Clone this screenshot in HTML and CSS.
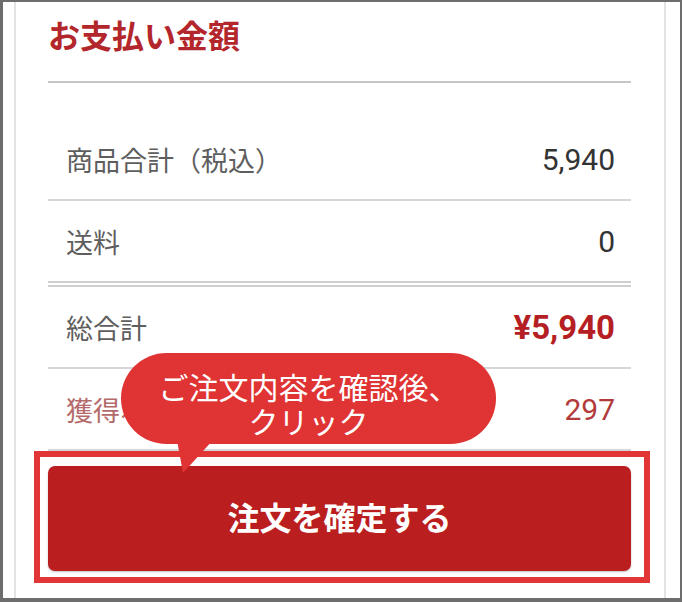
FILE: index.html
```html
<!DOCTYPE html>
<html lang="ja">
<head>
<meta charset="utf-8">
<title>お支払い金額</title>
<link rel="stylesheet" href="styles.css">
</head>
<body>
<div class="frame">
  <div class="card">
    <div class="content">
      <h2 class="title">お支払い金額</h2>
      <div class="rows">
        <div class="row">
          <span class="label">商品合計（税込）</span>
          <span class="value">5,940</span>
        </div>
        <div class="row row-double">
          <span class="label">送料</span>
          <span class="value">0</span>
        </div>
        <div class="row">
          <span class="label">総合計</span>
          <span class="value value-total">¥5,940</span>
        </div>
        <div class="row row-point">
          <span class="label">獲得ポイント</span>
          <span class="value">297</span>
        </div>
      </div>
      <div class="action">
        <button class="confirm" type="button">注文を確定する</button>
        <div class="highlight"></div>
      </div>
      <div class="bubble">
        <span class="bubble-text">ご注文内容を確認後、<br>クリック</span>
        <svg class="bubble-tail" width="36" height="33" viewBox="0 0 36 33">
          <polygon points="0,0 36,0 6,33" fill="#e03333"/>
        </svg>
      </div>
    </div>
  </div>
</div>
</body>
</html>
```

FILE: styles.css
```css
* { box-sizing: border-box; }

html, body {
  margin: 0;
  padding: 0;
  background: #ffffff;
}

.frame {
  width: 682px;
  height: 602px;
  border-style: solid;
  border-color: #6d6d6d;
  border-width: 2px 2px 4px 3px;
  background: #ffffff;
  overflow: hidden;
  font-family: "Noto Sans CJK JP", "Noto Sans", sans-serif;
}

.card {
  margin-left: 11px;
  width: 652px;
  height: 100%;
  border-left: 2px solid #e2e2e2;
  border-right: 2px solid #e2e2e2;
}

.content {
  position: relative;
  padding: 9px 33px 0 32px;
}

.title {
  margin: 0;
  font-size: 32px;
  line-height: 46px;
  font-weight: 700;
  color: #b3262b;
  padding-bottom: 24px;
  border-bottom: 2px solid #c6c6c6;
}

.rows {
  margin-top: 36px;
}

.row {
  height: 82px;
  display: flex;
  align-items: center;
  justify-content: space-between;
  padding: 0 16px 0 18px;
  border-bottom: 2px solid #d6d6d6;
}

.row-double {
  height: 86px;
  border-bottom: 6px double #cfcfcf;
}

.label {
  font-size: 27px;
  color: #5e5e5e;
}

.value {
  font-family: Roboto, "Liberation Sans", sans-serif;
  font-size: 30px;
  color: #333333;
}

.value-total {
  font-weight: 700;
  font-size: 33px;
  color: #b51f24;
}

.row-point .label { color: #b46a6a; }
.row-point .value { color: #b23a3a; }

.action {
  position: relative;
  margin-top: 15px;
}

.confirm {
  display: block;
  width: 583px;
  height: 105px;
  border: none;
  border-radius: 7px;
  background: #ba1e1e;
  box-shadow: 0 1px 2px rgba(0,0,0,0.25);
  color: #ffffff;
  font-family: "Noto Sans CJK JP", "Noto Sans", sans-serif;
  font-size: 32px;
  font-weight: 700;
  padding: 0 0 5px 0;
}

.highlight {
  position: absolute;
  left: -14px;
  right: -19px;
  top: -15px;
  bottom: -12px;
  border: 6px solid #e23636;
  pointer-events: none;
}

.bubble {
  position: absolute;
  left: 105px;
  top: 351px;
  width: 375px;
  height: 91px;
  border-radius: 46px;
  background: #e03333;
  color: #ffffff;
  text-align: center;
  padding-top: 16px;
}

.bubble-text {
  display: block;
  font-size: 30px;
  line-height: 34px;
}

.bubble-tail {
  position: absolute;
  left: 56px;
  top: 87px;
  display: block;
}
```
